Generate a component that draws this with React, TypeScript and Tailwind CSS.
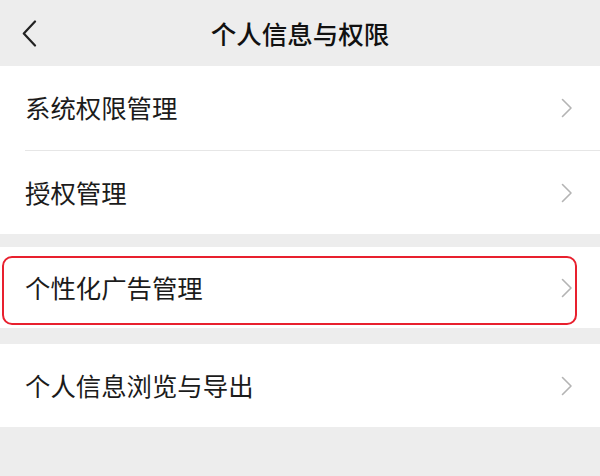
import React from "react";

const FONT = { fontFamily: '"Noto Sans CJK SC", "Noto Sans", sans-serif' };

function Chevron() {
  return (
    <svg width="12" height="20" viewBox="0 0 12 20" fill="none" className="shrink-0">
      <polyline
        points="1.5,1.5 10,10 1.5,18.5"
        stroke="#b4b4b4"
        strokeWidth="1.6"
        strokeLinecap="round"
        strokeLinejoin="round"
      />
    </svg>
  );
}

interface RowProps {
  label: string;
  heightClass: string;
  highlighted?: boolean;
}

function Row({ label, heightClass, highlighted }: RowProps) {
  return (
    <div className={`relative flex items-center justify-between bg-white pl-[25px] pr-[27px] ${heightClass}`}>
      <span className="text-[25.4px] leading-none text-[#1b1b1b]">{label}</span>
      <Chevron />
      {highlighted && (
        <div className="pointer-events-none absolute left-[2px] right-[23px] top-[9px] bottom-[3px] rounded-[10px] border-2 border-[#e8202e]" />
      )}
    </div>
  );
}

export default function App() {
  return (
    <div className="flex h-[476px] w-[600px] flex-col bg-[#ededed]" style={FONT}>
      {/* header */}
      <div className="grid h-[66px] shrink-0 grid-cols-[60px_1fr_60px] items-center">
        <div className="flex items-center pl-[22px]">
          <svg width="15" height="27" viewBox="0 0 15 27" fill="none">
            <polyline
              points="13,1.5 1.8,13.5 13,25.5"
              stroke="#222"
              strokeWidth="2.2"
              strokeLinecap="round"
              strokeLinejoin="round"
            />
          </svg>
        </div>
        <h1 className="text-center text-[25.5px] font-medium leading-none text-[#111]">个人信息与权限</h1>
        <div />
      </div>

      {/* group 1 */}
      <div className="bg-white">
        <Row label="系统权限管理" heightClass="h-[84px]" />
        <div className="ml-[25px] border-t border-[#e6e6e6]" />
        <Row label="授权管理" heightClass="h-[83px]" />
      </div>

      {/* group 2 */}
      <div className="mt-[13px]">
        <Row label="个性化广告管理" heightClass="h-[81px]" highlighted />
      </div>

      {/* group 3 */}
      <div className="mt-[16px]">
        <Row label="个人信息浏览与导出" heightClass="h-[83px]" />
      </div>
    </div>
  );
}
